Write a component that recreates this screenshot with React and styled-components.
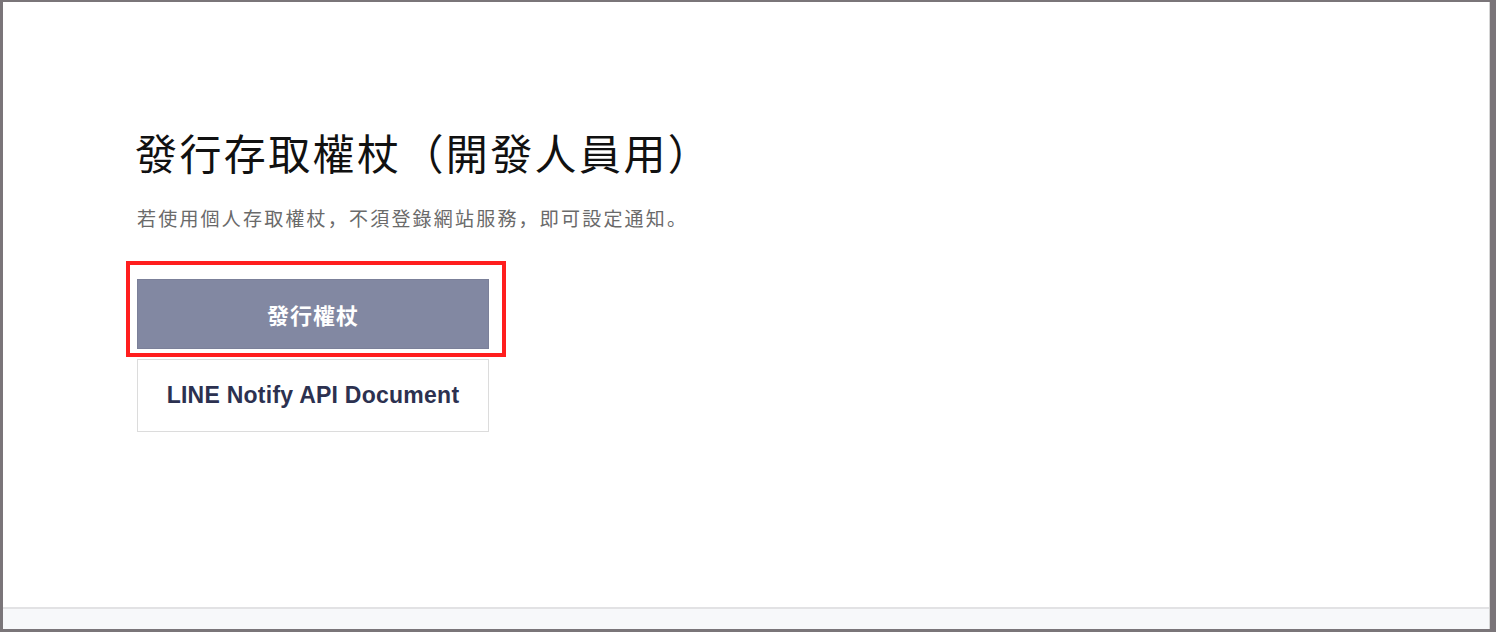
import React from "react";
import styled, { createGlobalStyle } from "styled-components";

const GlobalStyle = createGlobalStyle`
  html, body {
    margin: 0;
    padding: 0;
    height: 100%;
  }
  body {
    font-family: "Liberation Sans", "Noto Sans CJK TC", sans-serif;
  }
  #root {
    height: 100%;
  }
`;

const Frame = styled.div`
  height: 632px;
  box-sizing: border-box;
  padding: 2px 6px 3px 3px;
  background: #7a7579;
  display: flex;
`;

const Panel = styled.div`
  flex: 1;
  display: flex;
  flex-direction: column;
  background: #ffffff;
  border-right: 1px solid #d6d6d6;
`;

const Main = styled.main`
  flex: 1;
  padding: 122px 0 0 134px;
`;

const Title = styled.h1`
  margin: 0 0 0 -2px;
  font-family: "Noto Sans CJK TC", sans-serif;
  font-size: 42px;
  font-weight: 400;
  line-height: 56px;
  color: #111111;
  letter-spacing: 2.4px;
`;

const Lead = styled.p`
  margin: 24px 0 0;
  font-family: "Noto Sans CJK JP", "Noto Sans CJK TC", sans-serif;
  font-size: 19px;
  line-height: 28px;
  color: #6a6a6a;
  letter-spacing: 2.2px;
`;

const Actions = styled.div`
  margin-top: 47px;
  display: flex;
  flex-direction: column;
  gap: 10px;
  width: 352px;
`;

const Highlight = styled.div`
  position: relative;

  &::after {
    content: "";
    position: absolute;
    top: -18px;
    left: -11px;
    right: -17px;
    bottom: -8px;
    border: 4px solid #ff1e1e;
    pointer-events: none;
  }
`;

const Button = styled.button`
  display: flex;
  align-items: center;
  justify-content: center;
  width: 100%;
  height: ${(p) => (p.$primary ? "70px" : "73px")};
  box-sizing: border-box;
  border: 1px solid ${(p) => (p.$primary ? "#7b8099" : "#dcdcdc")};
  background: ${(p) => (p.$primary ? "#8288a2" : "#ffffff")};
  color: ${(p) => (p.$primary ? "#ffffff" : "#2c3150")};
  font-family: "Liberation Sans", "Noto Sans CJK TC", sans-serif;
  font-size: ${(p) => (p.$primary ? "22px" : "23px")};
  letter-spacing: ${(p) => (p.$primary ? "1px" : "0.25px")};
  font-weight: 700;
  cursor: pointer;
  padding: 0;
`;

const Footer = styled.footer`
  height: 20px;
  border-top: 2px solid #e2e2e4;
  background: #f7f8fa;
`;

export default function App() {
  return (
    <>
      <GlobalStyle />
      <Frame>
        <Panel>
          <Main>
            <Title>發行存取權杖（開發人員用）</Title>
            <Lead>若使用個人存取權杖，不須登錄網站服務，即可設定通知。</Lead>
            <Actions>
              <Highlight>
                <Button $primary>發行權杖</Button>
              </Highlight>
              <Button>LINE Notify API Document</Button>
            </Actions>
          </Main>
          <Footer />
        </Panel>
      </Frame>
    </>
  );
}
